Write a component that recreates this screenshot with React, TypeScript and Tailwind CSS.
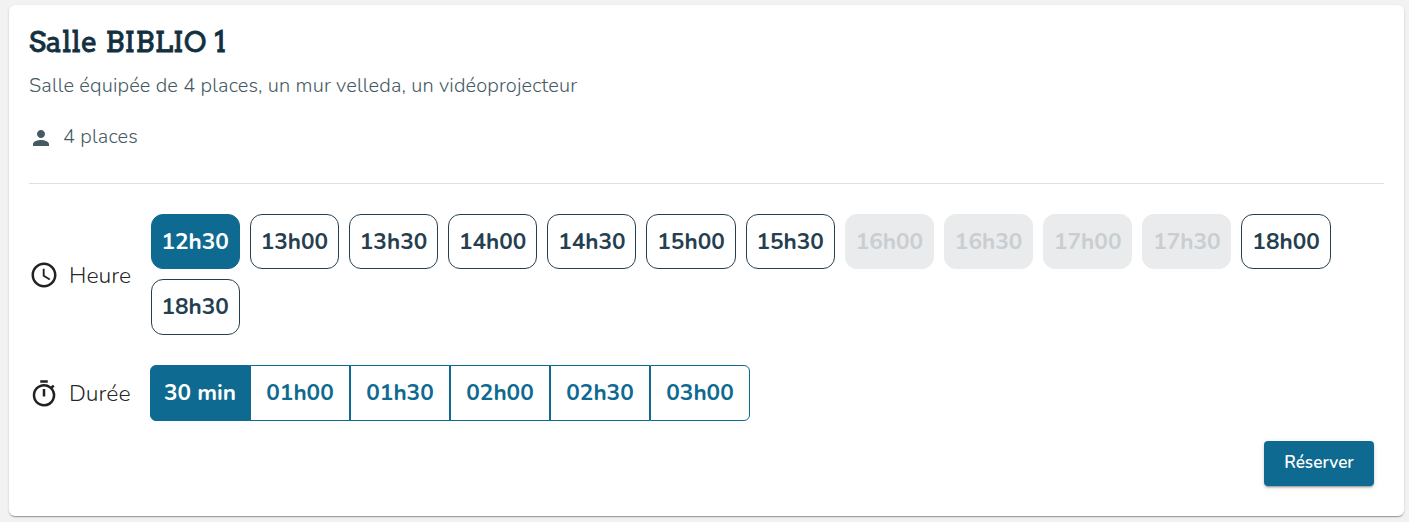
import { useState } from 'react';
import { MdPerson, MdSchedule, MdOutlineTimer } from 'react-icons/md';
import clsx from 'clsx';

const SLOTS = [
  { label: '12h30' },
  { label: '13h00' },
  { label: '13h30' },
  { label: '14h00' },
  { label: '14h30' },
  { label: '15h00' },
  { label: '15h30' },
  { label: '16h00', disabled: true },
  { label: '16h30', disabled: true },
  { label: '17h00', disabled: true },
  { label: '17h30', disabled: true },
  { label: '18h00' },
  { label: '18h30' },
];

const DURATIONS = ['30 min', '01h00', '01h30', '02h00', '02h30', '03h00'];

export default function App() {
  const [slot, setSlot] = useState('12h30');
  const [duration, setDuration] = useState('30 min');

  return (
    <div className="h-[522px] bg-[#f2f2f2] pt-[5px] pl-[9px] pr-[5px] font-['Nunito','Open_Sans',sans-serif]">
      <div className="flex h-[511px] flex-col rounded-md bg-white px-5 shadow-[0_2px_1px_-1px_rgba(0,0,0,0.2),0_1px_1px_0_rgba(0,0,0,0.14),0_1px_3px_0_rgba(0,0,0,0.12)]">
        <h1 className="mt-[19px] h-9 font-['Museo_Slab','Arvo','Rokkitt','Roboto_Slab','DejaVu_Serif',serif] text-[28.5px] leading-9 font-normal tracking-[0.25px] whitespace-nowrap text-[#12303f] [word-spacing:1.5px] [-webkit-text-stroke:0.8px_#12303f]">
          Salle BIBLIO 1
        </h1>
        <p className="mt-3 h-7 text-[20px] leading-7 font-[350] tracking-[0.15px] whitespace-nowrap text-[#455a64]">
          Salle équipée de 4 places, un mur velleda, un vidéoprojecteur
        </p>
        <div className="mt-[23px] flex h-7 items-center text-[#455a64]">
          <MdPerson className="mt-0.5 size-6" />
          <span className="ml-[10px] text-[20px] leading-7 font-[350] tracking-[0.15px]">4 places</span>
        </div>
        <hr className="mt-[32px] border-[#e0e0e0]" />

        <div className="mt-[30px] flex items-center">
          <div className="flex w-[121.6px] shrink-0 items-center pt-0.5 text-black/87">
            <MdSchedule className="size-[30px]" />
            <span className="ml-[10px] pt-px text-[23px] leading-8 font-light">Heure</span>
          </div>
          <div className="flex flex-wrap gap-[10px]">
            {SLOTS.map((s) => (
              <button
                key={s.label}
                disabled={s.disabled}
                onClick={() => setSlot(s.label)}
                className={clsx(
                  'flex h-[55.4px] w-[89.18px] items-center justify-center rounded-[12px] border text-[22.6px] font-bold',
                  s.disabled && 'border-[#e9ebec] bg-[#e9ebec] text-[#c8ced2]',
                  !s.disabled && slot === s.label && 'border-[#0e6a91] bg-[#0e6a91] text-white',
                  !s.disabled && slot !== s.label && 'border-[#263f50] bg-white text-[#263f50]',
                )}
              >
                {s.label}
              </button>
            ))}
          </div>
        </div>

        <div className="mt-[30px] flex items-center">
          <div className="flex w-[121px] shrink-0 items-center pt-0.5 text-black/87">
            <MdOutlineTimer className="size-[30px]" />
            <span className="ml-[10px] pt-px text-[23px] leading-8 font-light">Durée</span>
          </div>
          <div className="flex">
            {DURATIONS.map((d) => (
              <button
                key={d}
                onClick={() => setDuration(d)}
                className={clsx(
                  'flex h-14 w-[100px] items-center justify-center border border-[#0e6a91] text-[22.6px] font-bold first:rounded-l-md last:rounded-r-md',
                  duration === d ? 'bg-[#0e6a91] text-white' : 'bg-white text-[#0e6a91]',
                )}
              >
                {d}
              </button>
            ))}
          </div>
        </div>

        <div className="mt-5 flex justify-end pr-[10px]">
          <button className="h-[45px] w-[110px] rounded-[4px] bg-[#0e6a91] text-[17.2px] font-semibold text-white shadow-[0_3px_1px_-2px_rgba(0,0,0,0.2),0_2px_2px_0_rgba(0,0,0,0.14),0_1px_5px_0_rgba(0,0,0,0.12)]">
            Réserver
          </button>
        </div>
      </div>
    </div>
  );
}
